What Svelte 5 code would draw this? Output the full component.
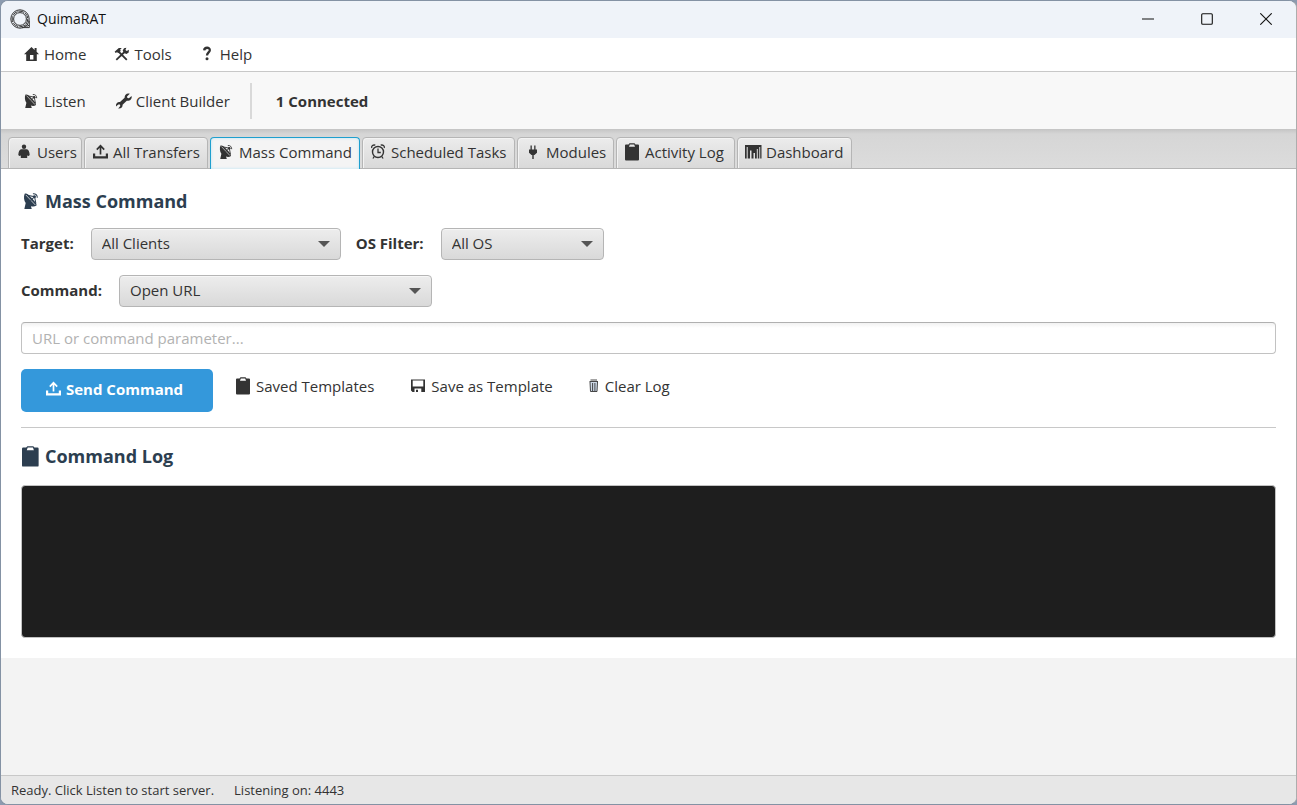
<script>
  let tabs = [
    { name: 'Users', icon: 'user' },
    { name: 'All Transfers', icon: 'upload' },
    { name: 'Mass Command', icon: 'dish' },
    { name: 'Scheduled Tasks', icon: 'clock' },
    { name: 'Modules', icon: 'plug' },
    { name: 'Activity Log', icon: 'clipboard' },
    { name: 'Dashboard', icon: 'chart' }
  ];
  let activeTab = $state('Mass Command');
  let target = $state('All Clients');
  let osFilter = $state('All OS');
  let command = $state('Open URL');
  let parameter = $state('');
  let log = $state('');

  function clearLog() {
    log = '';
  }
</script>

{#snippet icon(name)}
  <svg class="icon" viewBox="0 0 16 16" aria-hidden="true">
    {#if name == 'home'}
      <path fill="currentColor" fill-rule="evenodd" d="M7.5 1 0 8.2h2.2V15h10.6V8.2H15L12.6 5.8V2h-2v2zM6 9h3.4v4.5H6z" />
    {:else if name == 'tools'}
      <path d="m4.5 5.5 8.3 8.3M11.5 5 2.3 13.8" stroke="currentColor" stroke-width="1.8" fill="none" />
      <path fill="currentColor" d="M.6 5.8 4.8 1.9l3 .1-1.6 1.5.5 1.6-2.2 2-1.6-.8L1.7 7zM10 2.3l2.4-.6-1 2.2 1.4 1.1 2.1-1.2-.2 2.6-2.2 1.5-2.6-1-1.2-2.4z" />
    {:else if name == 'help'}
      <path d="M4.2 4.4C4.400.8 10 1 9.800 4.200 9.700 6.400 7 6.600 7 9.600" stroke="currentColor" stroke-width="2.300" fill="none" />
      <circle cx="7" cy="12.700" r="1.500" fill="currentColor" />
    {:else if name == 'dish'}
      <path fill="currentColor" d="M1.500 1.500C3.500 1 5.500 3 7.500 5.200S12.500 10 12 12c-1.500 1.200-3.500 1.200-5 .6l.8 2.400H1.200L2.400 9.800C.8 7.500.4 4 1.500 1.500z" />
      <path d="M2.500 2.600 11 11.600" stroke="#fff" stroke-width=".6" fill="none" />
      <path d="M3.800 2.800 10.300 4.200 11.400 10M6.600 7.600l4-3.800" stroke="currentColor" stroke-width=".9" fill="none" />
      <path d="M8.800 1.500c2.500-.2 4 1.300 3.900 3.700" stroke="currentColor" stroke-width=".9" fill="none" />
      <circle cx="10.200" cy="4.200" r="1.300" fill="currentColor" />
    {:else if name == 'wrench'}
      <path fill="currentColor" d="M13.800.8 11 3.500l.4 1.500 1.500.3L15.600 3c.6 2.200-.6 4.400-3.200 4.800l-1.600-.1-4.200 4c.2 2.300-1.400 4.100-4.400 3.800L4.300 13l-.4-1.400-1.600-.2L0 13.400C-.4 10.400 1.500 8.700 4 9l4.600-4.300C8.500 1.800 10.800-.1 13.800.8z" />
    {:else if name == 'user'}
      <circle cx="7" cy="2.800" r="2.200" fill="currentColor" />
      <path fill="currentColor" d="M4.200 5.300h5.600c1.800.4 2.700 2.600 2.900 5.700l-1 1-1.500-.5V14H3.800v-2.500l-1.500.5-1-1c.2-3.100 1.100-5.300 2.900-5.700z" />
    {:else if name == 'upload'}
      <path fill="currentColor" d="M0 9.500h2.200v2.800h10.600V9.500H15V14.500H0z" />
      <path d="M7.500 10.500V2M3.800 5.700l3.700-4 3.700 4" stroke="currentColor" stroke-width="1.700" fill="none" />
    {:else if name == 'clock'}
      <circle cx="7" cy="8" r="5.500" stroke="currentColor" stroke-width="1.400" fill="none" />
      <path d="M7 4.500v4h2.800M3.300 12.500l-1.400 2M10.700 12.500l1.400 2M.7 4C.3 2 2 .5 4.300 1.200M13.300 4C13.700 2 12 .5 9.700 1.200" stroke="currentColor" stroke-width="1.300" fill="none" />
    {:else if name == 'plug'}
      <path fill="currentColor" d="M4.500 1.500h1.300v4h2.400v-4h1.300v4H11v3.300L8.500 11h-.8v4H6.300v-4h-.8L3 8.800V5.500h1.500z" />
    {:else if name == 'clipboard'}
      <path fill="currentColor" fill-rule="evenodd" d="M0 1.500Q0 .5 1 .5h2.500l1-1.200h5l1 1.200H13q1 0 1 1V15.500q0 1-1 1H1q-1 0-1-1zM4.800.4 4 2.800h6L9.200.4z" />
    {:else if name == 'chart'}
      <path fill="currentColor" fill-rule="evenodd" d="M-1 1h16.500v13.500H-1zM.7 3v11.500h1V3zM4 6.500v8h1.500v-8zM7.500 9v5.500H9V9zM10.800 5v9.500h1V5zM13.300 3v11.500h.9V3z" />
    {:else if name == 'save'}
      <path fill="currentColor" fill-rule="evenodd" d="M0 1.500h14v12.500H1.500L0 12.500zM1.700 2.500v6h10.600v-6zM3.500 10.500v3.500H5v-2.200h2V14h3.300v-3.500z" />
    {:else if name == 'trash'}
      <path fill="#cdd9e8" d="M0 3.500h7.500L7 13.500H.5z" />
      <path d="M-.5 3.500H8M0 4l.5 9.500H7L7.500 4M2.600 5v8M4.900 5v8M.5 2h6.500" stroke="currentColor" stroke-width=".9" fill="none" />
    {/if}
  </svg>
{/snippet}

<div class="window">
  <header class="titlebar">
    <svg class="logo" viewBox="0 0 20 20" aria-hidden="true">
      <circle cx="10" cy="10" r="9.200" />
      <circle cx="10" cy="10" r="7.800" stroke-dasharray="6 1" />
      <circle cx="10" cy="10" r="6.400" />
      <path d="M12 18.600h7.300v-7M14 17h4M16.500 14.500l2.500 2.500" />
    </svg>
    <span class="title">QuimaRAT</span>
    <button class="winbtn" aria-label="Minimize">
      <svg viewBox="0 0 12 12"><path d="M0 6h12" /></svg>
    </button>
    <button class="winbtn" aria-label="Maximize">
      <svg viewBox="0 0 12 12"><rect x=".7" y=".7" width="10.600" height="10.600" rx="1" /></svg>
    </button>
    <button class="winbtn" aria-label="Close">
      <svg viewBox="0 0 12 12"><path d="m.3.3 11.400 11.400M11.700.3.3 11.700" /></svg>
    </button>
  </header>

  <nav class="menubar">
    <button class="flat">{@render icon('home')}Home</button>
    <button class="flat">{@render icon('tools')}Tools</button>
    <button class="flat">{@render icon('help')}Help</button>
  </nav>

  <div class="toolbar">
    <button class="flat">{@render icon('dish')}Listen</button>
    <button class="flat">{@render icon('wrench')}Client Builder</button>
    <div class="divider"></div>
    <strong>1 Connected</strong>
  </div>

  <div class="tabs" role="tablist">
    {#each tabs as tab}
      <button
        class="tab"
        class:active={activeTab == tab.name}
        role="tab"
        aria-selected={activeTab == tab.name}
        onclick={() => (activeTab = tab.name)}
      >{@render icon(tab.icon)}{tab.name}</button>
    {/each}
  </div>

  <main class="panel">
    <h2>{@render icon('dish')}Mass Command</h2>

    <div class="row">
      <label for="target">Target:</label>
      <div class="combo target">
        <select id="target" bind:value={target}>
          <option>All Clients</option>
        </select>
      </div>
      <label for="os">OS Filter:</label>
      <div class="combo os">
        <select id="os" bind:value={osFilter}>
          <option>All OS</option>
        </select>
      </div>
    </div>

    <div class="row">
      <label for="command">Command:</label>
      <div class="combo command">
        <select id="command" bind:value={command}>
          <option>Open URL</option>
        </select>
      </div>
    </div>

    <input class="parameter" type="text" aria-label="Parameter" placeholder="URL or command parameter..." bind:value={parameter} />

    <div class="row actions">
      <button class="send">{@render icon('upload')}Send Command</button>
      <button class="action">{@render icon('clipboard')}Saved Templates</button>
      <button class="action">{@render icon('save')}Save as Template</button>
      <button class="action clear" onclick={clearLog}>{@render icon('trash')}Clear Log</button>
    </div>

    <hr />

    <h2 class="log-title">{@render icon('clipboard')}Command Log</h2>
    <textarea class="log" aria-label="Command Log" readonly value={log}></textarea>
  </main>

  <footer class="status">
    <span>Ready. Click Listen to start server.</span>
    <span>Listening on: 4443</span>
  </footer>
</div>

<style>
  :global(body) {
    background: #8c9bb0;
  }

  .window {
    display: flex;
    flex-direction: column;
    box-sizing: border-box;
    min-height: 100vh;
    border: 1px solid #8492a4;
    border-right-color: #adadad;
    border-radius: 8px;
    overflow: hidden;
    background: #f3f3f3;
    color: #333;
    font-family: "Open Sans", "Noto Sans", sans-serif;
    font-size: 15px;
    line-height: 20px;
  }

  button,
  select,
  input,
  textarea {
    box-sizing: border-box;
    margin: 0;
    border: 0;
    padding: 0;
    background: none;
    color: inherit;
    font: inherit;
  }

  .icon {
    flex: none;
    width: 16px;
    height: 16px;
    margin-right: 4px;
    overflow: visible;
  }

  .titlebar {
    display: flex;
    align-items: center;
    box-sizing: border-box;
    height: 37px;
    padding: 0 1px 1px 9px;
    background: #eff3f9;
    color: #111;
    font-size: 14px;
  }

  .logo {
    width: 20px;
    height: 20px;
    margin-right: 7px;
    fill: none;
    stroke: #333;
    stroke-width: 1;
  }

  .title {
    flex: 1;
  }

  .winbtn {
    display: flex;
    align-items: center;
    justify-content: center;
    width: 59px;
    height: 36px;
  }

  .winbtn svg {
    width: 12px;
    height: 12px;
    fill: none;
    stroke: #111;
    stroke-width: 1.1;
  }

  .menubar {
    display: flex;
    gap: 28px;
    height: 31px;
    padding: 0 0 2px 23px;
    border-bottom: 1px solid #c8c8c8;
    background: #fff;
  }

  .flat {
    display: flex;
    align-items: center;
  }

  .toolbar {
    display: flex;
    align-items: center;
    gap: 30px;
    height: 57px;
    padding-left: 23px;
    background: #f8f8f8;
  }

  .divider {
    width: 2px;
    height: 36px;
    margin: 0 -6px 0 -10px;
    background: #d9d9d9;
  }

  .tabs {
    display: grid;
    grid-template-columns: 74px 124px 150px 153px 97px 119px 115px;
    align-items: end;
    gap: 2px;
    height: 40px;
    padding-left: 7px;
    background: linear-gradient(#c4c4c4, #d6d6d6 5px, #dcdcdc);
    box-shadow: inset 0 -1px #b5b5b5;
  }

  .tab {
    display: flex;
    align-items: center;
    height: 32px;
    padding: 0 0 2px 8px;
    border: 1px solid #b5b5b5;
    border-radius: 4px 4px 0 0;
    background: linear-gradient(#ececec, #d9d9d9);
    box-shadow: inset 1px 1px #f3f3f3;
    white-space: nowrap;
  }

  .tab.active {
    padding-bottom: 3px;
    border-color: #1f9fce;
    border-bottom: 0;
    background: #f4f4f4;
    box-shadow: inset 0 0 3px #b5e2f2;
  }

  .panel {
    display: flex;
    flex-direction: column;
    gap: 15px;
    padding: 20px;
    background: #fff;
  }

  h2 {
    display: flex;
    align-items: center;
    margin: 0;
    color: #2c3e50;
    font-size: 18px;
    line-height: 24px;
  }

  h2 .icon {
    width: 18px;
    height: 18px;
    margin: 0 4px 0 2px;
  }

  .log-title {
    line-height: 27px;
  }

  .log-title .icon {
    width: 19px;
    height: 19px;
    margin-left: 1px;
  }

  .row {
    display: flex;
    align-items: center;
    gap: 15px;
  }

  label {
    padding: 0 2px 2px 0;
    font-weight: bold;
  }

  .combo {
    position: relative;
    height: 32px;
  }

  .target {
    width: 250px;
  }

  .os {
    width: 163px;
  }

  .command {
    width: 313px;
  }

  .combo::after {
    content: "";
    position: absolute;
    top: 13px;
    right: 11px;
    border: solid transparent;
    border-width: 6px 6px 0;
    border-top-color: #555;
    pointer-events: none;
  }

  select {
    width: 100%;
    height: 100%;
    padding: 0 10px 2px;
    border: 1px solid #b5b5b5;
    border-radius: 4px;
    background: linear-gradient(#ededed, #d9d9d9);
    box-shadow: inset 0 1px #f6f6f6;
    appearance: none;
  }

  .parameter {
    width: 100%;
    height: 32px;
    padding: 0 10px;
    border: 1px solid #c2c2c2;
    border-top-color: #b0b0b0;
    border-radius: 4px;
    background: linear-gradient(#f2f2f2, #fff 5px);
  }

  .parameter::placeholder {
    color: #b2b2b2;
  }

  .actions {
    align-items: flex-start;
  }

  .send {
    display: flex;
    align-items: center;
    min-width: 192px;
    height: 43px;
    padding: 0 25px 3px;
    border-radius: 5px;
    background: #3498db;
    color: #fff;
    font-weight: bold;
  }

  .action {
    display: flex;
    align-items: center;
    height: 34px;
    padding: 0 14px 0 8px;
  }

  .clear .icon {
    margin-right: -1px;
  }

  hr {
    width: 100%;
    height: 1px;
    margin: 0;
    border: 0;
    background: #c8c8c8;
  }

  .log {
    width: 100%;
    height: 153px;
    border: 1px solid #c2c2c2;
    border-radius: 4px;
    background: #1e1e1e;
    color: #ddd;
    resize: none;
  }

  .status {
    display: flex;
    align-items: center;
    gap: 20px;
    height: 28px;
    margin-top: auto;
    padding-left: 10px;
    border-top: 1px solid #c8c8c8;
    background: #e7e7e7;
    font-size: 13px;
  }
</style>
